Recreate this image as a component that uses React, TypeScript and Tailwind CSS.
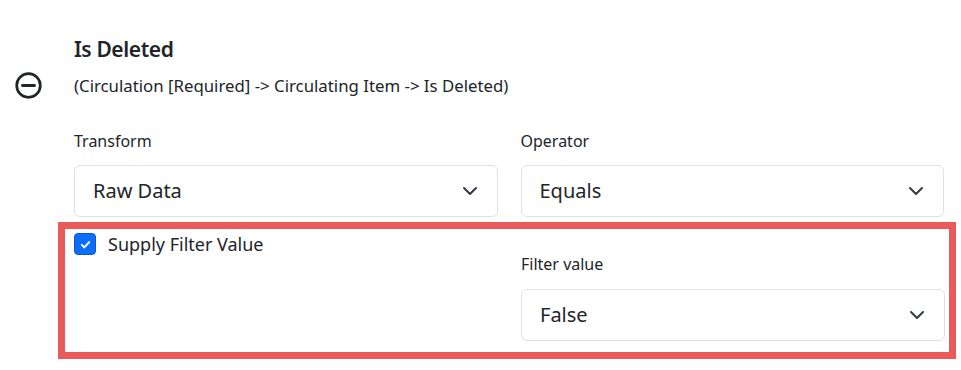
import React from "react";

function Chevron() {
  return (
    <svg width="16" height="16" viewBox="0 0 16 16" className="shrink-0">
      <path d="M2 5l6 6 6-6" fill="none" stroke="#343a40" strokeWidth="2" strokeLinecap="round" strokeLinejoin="round" />
    </svg>
  );
}

function Select({ value }: { value: string }) {
  return (
    <div className="flex h-[52px] items-center justify-between rounded-[6px] border border-[#dee2e6] bg-white pl-[18px] pr-[19px] text-[20px] text-[#212529]">
      <span>{value}</span>
      <Chevron />
    </div>
  );
}

export default function App() {
  return (
    <div
      className="h-[370px] w-[961px] bg-white text-[#212529]"
      style={{ fontFamily: '"Noto Sans", sans-serif' }}
    >
      <div className="flex pt-[34px]">
        <div className="w-[74px] shrink-0 pl-[15px] pt-[38px]">
          <svg width="27" height="27" viewBox="0 0 27 27">
            <circle cx="13.5" cy="13.5" r="11.8" fill="none" stroke="#212529" strokeWidth="2.7" />
            <path d="M7.5 13.5h12" stroke="#212529" strokeWidth="2.8" strokeLinecap="round" />
          </svg>
        </div>
        <div className="w-[870px] shrink-0">
          <div className="pt-[1px] text-[21px] font-semibold leading-[28px] tracking-[-0.4px]">Is Deleted</div>
          <div className="mt-[11px] text-[16.8px] leading-[24px]">
            (Circulation [Required] -&gt; Circulating Item -&gt; Is Deleted)
          </div>
          <div className="mt-[31px] grid grid-cols-2 gap-x-[23px]">
            <div>
              <div className="text-[16px] leading-[24px]">Transform</div>
              <div className="mt-[12px]">
                <Select value="Raw Data" />
              </div>
            </div>
            <div>
              <div className="text-[16px] leading-[24px]">Operator</div>
              <div className="mt-[12px]">
                <Select value="Equals" />
              </div>
            </div>
          </div>
          <div className="ml-[-16px] mt-[5px] w-[898px] border-[7px] border-[#eb5a5a] pb-[11px] pl-[9px] pr-[4px] pt-[4px]">
            <div className="grid grid-cols-2 gap-x-[23px]">
              <div className="flex items-start gap-[12px]">
                <div className="flex h-[22px] w-[22px] items-center justify-center rounded-[4px] border border-[#0a58ca] bg-[#0d6efd]">
                  <svg width="13" height="13" viewBox="0 0 16 16">
                    <path d="M3.5 8.5l3 3 6-6.5" fill="none" stroke="#fff" strokeWidth="2.4" strokeLinecap="round" strokeLinejoin="round" />
                  </svg>
                </div>
                <span className="text-[18px] leading-[22px]">Supply Filter Value</span>
              </div>
              <div className="pt-[19px]">
                <div className="text-[16px] leading-[24px]">Filter value</div>
                <div className="mt-[13px]">
                  <Select value="False" />
                </div>
              </div>
            </div>
          </div>
        </div>
      </div>
    </div>
  );
}
